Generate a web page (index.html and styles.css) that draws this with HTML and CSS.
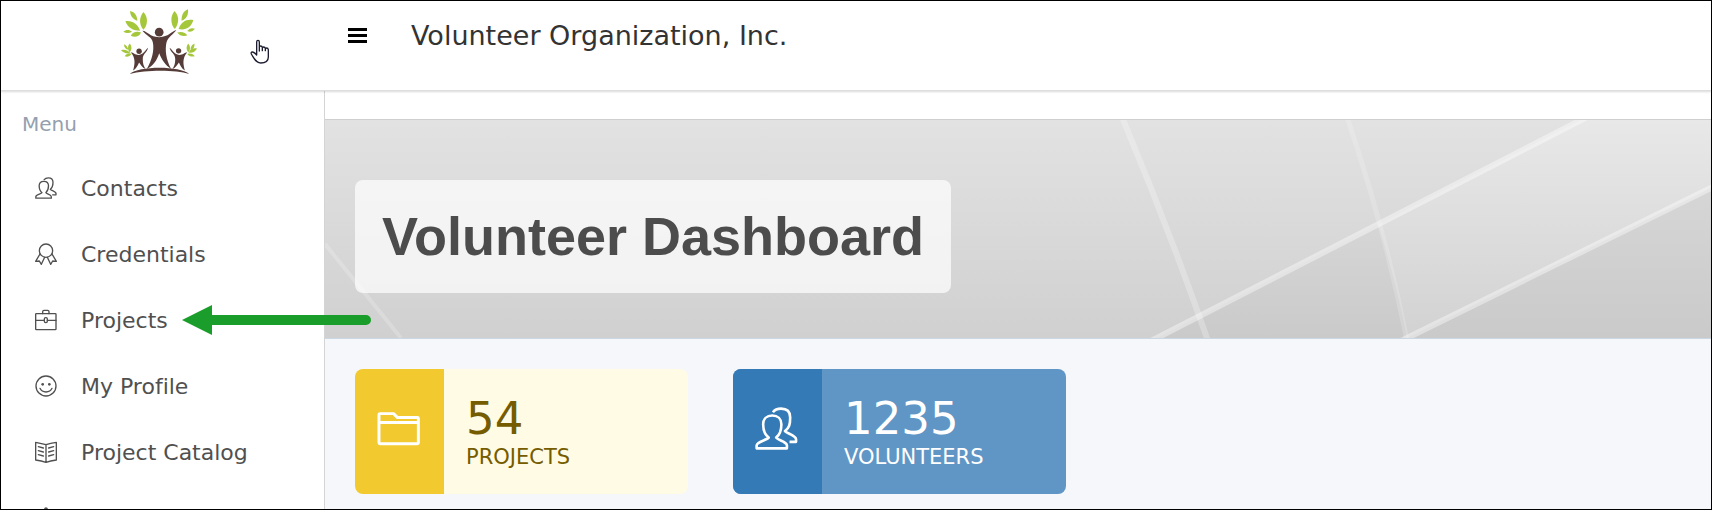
FILE: index.html
```html
<!DOCTYPE html>
<html lang="en">
<head>
    <meta charset="UTF-8">
    <title>Volunteer Dashboard</title>
    <meta name="viewport" content="width=device-width, initial-scale=1.0">
    <link rel="stylesheet" href="styles.css">
</head>
<body>
    <svg class="sprite" aria-hidden="true">
        <symbol id="icon-users" viewBox="104 169 130 132">
            <path d="M156 195c-17 0-28 11-28 27 0 22 5 32 17 41-6 8-37 12-37 24v9h93v-9c0-12-28-16-33-24 11-9 16-20 16-41 0-16-11-27-28-27z"/>
            <path d="M158 185c5-7 14-11 25-11 18 0 28 10 28 27 0 22-3 32-16 42 6 7 34 14 34 25v8h-20"/>
        </symbol>
        <symbol id="icon-folder" viewBox="110 170 130 130">
            <path class="thick" d="M119 190h41l12 12h60q3 0 3 3v73q0 3-3 3H119q-3 0-3-3v-85q0-3 3-3zM116 217h119"/>
        </symbol>
    </svg>

    <header class="topbar">
        <div class="brand">
            <svg class="logo" viewBox="60 25 236 200" role="img" aria-label="Volunteer Organization logo">
                <g fill="#a5c73b">
                    <path d="M93 34c12 2 21 12 22 29-12-3-21-13-22-29z"/>
                    <path d="M133 37c14 14 14 39 0 53-14-16-13-38 0-53z"/>
                    <path d="M79 64c20-3 38 9 44 29-21 0-38-9-44-29z"/>
                    <path d="M73 96c8-7 18-7 26 0-9 5-18 5-26 0z"/>
                    <path d="M95 108c6-12 18-15 31-10-7 13-18 16-31 10z"/>
                    <path d="M226 34c14 15 14 36 1 54-14-14-14-40-1-54z"/>
                    <path d="M266 29c2 18-5 29-19 34-1-17 6-29 19-34z"/>
                    <path d="M282 61c-6 22-22 31-44 27 7-21 23-31 44-27z"/>
                    <path d="M287 87c-7 9-15 10-23 7 5-8 13-11 23-7z"/>
                    <path d="M234 98c14-4 25 0 30 9-12 3-23 1-30-9z"/>
                    <path d="M75 133c8 3 12 9 12 17-8-3-12-9-12-17z"/>
                    <path d="M92 131c7 8 7 18 0 27-7-9-7-19 0-27z"/>
                    <path d="M66 151c12-3 22 1 28 9-12 2-22-2-28-9z"/>
                    <path d="M77 169c4-7 12-10 20-7-5 8-12 10-20 7z"/>
                    <path d="M267 131c7 9 7 18 0 27-7-9-7-18 0-27z"/>
                    <path d="M285 131c2 10-3 17-11 20-1-9 3-16 11-20z"/>
                    <path d="M293 146c-5 10-14 14-25 12 5-10 14-14 25-12z"/>
                    <path d="M264 162c10-3 18 0 22 7-9 3-17 0-22-7z"/>
                </g>
                <g fill="#553c38">
                    <circle cx="180" cy="97" r="13"/>
                    <path d="M130 93c16 1 21 19 50 19s36-17 51-21c-7 12-24 20-29 36-5 22-2 51 14 80-17-10-28-27-36-47-6 20-18 38-37 47 16-28 23-57 18-80-4-16-18-18-31-34z"/>
                    <circle cx="120" cy="154" r="8"/>
                    <path d="M95 157c9 1 12 8 24 8 14 0 18-13 28-21-4 15-16 18-16 34 0 14 3 20 8 29-10-4-14-12-19-19-5 10-8 18-18 24 5-18 9-37-7-55z"/>
                    <circle cx="238" cy="153" r="8"/>
                    <path d="M264 157c-9 1-12 8-24 8-15 0-18-13-29-21 4 15 17 18 17 34 0 14-3 20-8 29 10-4 14-12 19-19 5 10 8 18 18 24-5-18-9-37 7-55z"/>
                    <path d="M92 222c27-25 150-25 178 0-42-13-128-13-178 0z"/>
                </g>
            </svg>
            <svg class="cursor" viewBox="450 117 60 78" aria-hidden="true">
                <path d="M470 160v-34q0-5 4-5t4 5v27-12q0-3 4-3t5 4v10-7q0-4 4-4t5 4v7-4q0-4 4-4t5 5v22q0 18-23 18c-14 0-19-13-28-27q-2-6 3-6 6 0 13 9z"/>
            </svg>
        </div>
        <button class="menu-toggle" type="button" aria-label="Toggle menu">
            <span></span>
            <span></span>
            <span></span>
        </button>
        <div class="org-name">Volunteer Organization, Inc.</div>
    </header>

    <div class="layout">
        <nav class="sidebar">
            <div class="menu-title">Menu</div>
            <ul class="menu">
                <li>
                    <a href="#">
                        <svg class="icon"><use href="#icon-users"/></svg>
                        Contacts
                    </a>
                </li>
                <li>
                    <a href="#">
                        <svg class="icon small" viewBox="104 455 66 66">
                            <circle cx="137" cy="478" r="20"/>
                            <path d="M119 488l-13 22 11-1 6 10 10-21M155 488l13 22-11-1-6 10-10-21"/>
                        </svg>
                        Credentials
                    </a>
                </li>
                <li class="current">
                    <a href="#">
                        <svg class="icon small" viewBox="104 54 66 66">
                            <rect x="106" y="68" width="61" height="48" rx="2"/>
                            <path d="M127 68v-6q0-4 4-4h11q4 0 4 4v6M106 88h26M141 88h26"/>
                            <rect x="132" y="80" width="9" height="15" rx="4"/>
                        </svg>
                        Projects
                    </a>
                    <svg class="arrow" viewBox="0 0 190 30" aria-hidden="true">
                        <path d="M0 15L30 0v10h154a5 5 0 0 1 0 10H30v10z"/>
                    </svg>
                </li>
                <li>
                    <a href="#">
                        <svg class="icon small" viewBox="104 251 66 66">
                            <circle cx="137" cy="284" r="30"/>
                            <path d="M119 291q5 11 18 11t18-11"/>
                            <circle class="dot" cx="127" cy="279" r="4"/>
                            <circle class="dot" cx="147" cy="279" r="4"/>
                        </svg>
                        My Profile
                    </a>
                </li>
                <li>
                    <a href="#">
                        <svg class="icon small" viewBox="104 452 66 66">
                            <path d="M137 463q-12-3-31-7v53q18 3 31 7 13-4 31-7v-53q-18 3-31 7zM137 463v53"/>
                            <path d="M114 469l15 4M114 481l15 4M114 493l15 4M160 469l-15 4M160 481l-15 4M160 493l-15 4"/>
                        </svg>
                        Project Catalog
                    </a>
                </li>
                <li>
                    <a href="#" aria-label="Notifications">
                        <svg class="icon small" viewBox="104 650 66 66">
                            <path d="M133 658q0-5 4-5t4 5q16 4 16 22 0 18 9 25h-58q9-7 9-25 0-18 16-22z"/>
                        </svg>
                    </a>
                </li>
            </ul>
        </nav>

        <main class="content">
            <section class="hero">
                <svg class="hero-lines" viewBox="0 0 1386 218" preserveAspectRatio="xMaxYMid slice" aria-hidden="true">
                    <defs>
                        <linearGradient id="shade" x1="0" y1="0" x2="0" y2="1">
                            <stop offset="0" stop-color="#e8e8e8"/>
                            <stop offset="1" stop-color="#d2d2d2"/>
                        </linearGradient>
                        <linearGradient id="shade-dark" x1="0" y1="0" x2="0" y2="1">
                            <stop offset="0" stop-color="#d6d6d6"/>
                            <stop offset="1" stop-color="#cacaca"/>
                        </linearGradient>
                    </defs>
                    <path fill="url(#shade)" d="M1256 0h130v68l-304 150H832z"/>
                    <path fill="url(#shade-dark)" d="M1053 104q18 56 29 114H832z"/>
                    <path fill="url(#shade-dark)" d="M1386 68v150h-304z"/>
                    <g fill="none" stroke="#fff">
                        <path stroke-width="4" opacity=".2" d="M0 124l76 94"/>
                        <path stroke-width="6" opacity=".26" d="M797-3q47 112 86 224"/>
                        <path stroke-width="5" opacity=".18" d="M1022-3q38 112 60 224"/>
                        <path stroke-width="6" opacity=".4" d="M1262-3L826 221"/>
                        <path stroke-width="6" opacity=".4" d="M1392 65l-316 156"/>
                    </g>
                </svg>
                <h1>Volunteer Dashboard</h1>
            </section>

            <section class="stats">
                <a class="stat stat-projects" href="#">
                    <span class="stat-icon">
                        <svg><use href="#icon-folder"/></svg>
                    </span>
                    <span class="stat-text">
                        <span class="stat-number">54</span>
                        <span class="stat-label">PROJECTS</span>
                    </span>
                </a>
                <a class="stat stat-volunteers" href="#">
                    <span class="stat-icon">
                        <svg><use href="#icon-users"/></svg>
                    </span>
                    <span class="stat-text">
                        <span class="stat-number">1235</span>
                        <span class="stat-label">VOLUNTEERS</span>
                    </span>
                </a>
            </section>
        </main>
    </div>
</body>
</html>
```
FILE: styles.css
```css
* {
    box-sizing: border-box;
}
body {
    margin: 0;
    height: 100vh;
    display: flex;
    flex-direction: column;
    overflow: hidden;
    border: 1px solid #000;
    background: #fff;
    font-family: Verdana, "DejaVu Sans", sans-serif;
    font-variant-ligatures: none;
    color: #505050;
}
a {
    color: inherit;
    text-decoration: none;
}
.sprite {
    position: absolute;
    width: 0;
    height: 0;
}

/* Top bar */
.topbar {
    position: relative;
    z-index: 2;
    flex: none;
    display: flex;
    align-items: flex-start;
    padding-bottom: 15px;
    border-bottom: 1px solid #dedede;
    box-shadow: 0 1px 2px rgba(0,0,0,0.15);
    background: #fff;
}
.brand {
    position: relative;
    width: 324px;
    padding: 7px 0 0 118px;
}
.logo {
    display: block;
    width: 79px;
    height: 67px;
}
.cursor {
    position: absolute;
    left: 249px;
    top: 38px;
    width: 20px;
    height: 26px;
    fill: #fff;
    stroke: #1c1c30;
    stroke-width: 4;
    stroke-linejoin: round;
}
.menu-toggle {
    display: flex;
    flex-direction: column;
    gap: 3px;
    margin: 27px 44px 0 23px;
    padding: 0;
    border: none;
    background: none;
    cursor: pointer;
}
.menu-toggle span {
    width: 19px;
    height: 3px;
    background: #000;
}
.org-name {
    padding-top: 19px;
    font-size: 27px;
    line-height: 32px;
    color: #333;
}

/* Sidebar */
.layout {
    flex: 1;
    display: flex;
    min-height: 0;
    overflow: hidden;
}
.sidebar {
    flex: none;
    width: 324px;
    border-right: 1px solid #d4d4d4;
}
.menu-title {
    padding: 20px 21px 18px;
    font-size: 20px;
    line-height: 26px;
    color: #94a0ae;
}
.menu {
    margin: 0;
    padding: 0;
    list-style: none;
}
.menu li {
    position: relative;
}
.menu a {
    display: flex;
    align-items: center;
    gap: 24px;
    height: 66px;
    padding-left: 34px;
    font-size: 22px;
}
.icon {
    width: 22px;
    height: 22px;
    fill: none;
    stroke: #505050;
    stroke-width: 8;
    stroke-linejoin: round;
    stroke-linecap: round;
}
.icon.small {
    stroke-width: 4;
}
.icon .dot {
    fill: #505050;
    stroke: none;
}
.arrow {
    position: absolute;
    z-index: 3;
    left: 181px;
    top: 18px;
    width: 190px;
    height: 30px;
    fill: #1b9d2b;
}

/* Content */
.content {
    flex: 1;
    min-width: 0;
    padding-top: 28px;
}
.hero {
    position: relative;
    z-index: -1;
    display: flex;
    padding: 60px 30px 45px;
    border-top: 1px solid #cfcfcf;
    border-bottom: 1px solid #c9d8e2;
    background: linear-gradient(#e2e2e2, #d0d0d0);
}
.hero-lines {
    position: absolute;
    inset: 0;
    width: 100%;
    height: 100%;
}
.hero h1 {
    position: relative;
    margin: 0;
    padding: 26px 27px 27px;
    border-radius: 8px;
    background: rgba(255,255,255,0.7);
    font-family: Arial, "Liberation Sans", sans-serif;
    font-size: 54px;
    line-height: 60px;
    color: #4c4c4c;
}
.stats {
    display: flex;
    flex-wrap: wrap;
    gap: 45px;
    padding: 30px;
    background: #f5f7fb;
}
.stat {
    display: flex;
    width: 333px;
    border-radius: 8px;
    overflow: hidden;
}
.stat-icon {
    display: flex;
    align-items: center;
    justify-content: center;
    width: 89px;
    padding: 0 2px 6px 0;
}
.stat-icon svg {
    width: 43px;
    height: 43px;
    fill: none;
    stroke: #fff;
    stroke-width: 8;
    stroke-linejoin: round;
}
.thick {
    stroke-width: 9;
}
.stat-text {
    display: flex;
    flex-direction: column;
    padding: 24px 22px;
}
.stat-number {
    font-size: 45px;
    line-height: 51px;
}
.stat-label {
    font-size: 21px;
    line-height: 26px;
}
.stat-projects {
    background: #fffbe4;
    color: #755c00;
}
.stat-projects .stat-icon {
    background: #f2c92f;
}
.stat-volunteers {
    background: #6096c5;
    color: #fff;
}
.stat-volunteers .stat-icon {
    background: #347ab6;
}
```
